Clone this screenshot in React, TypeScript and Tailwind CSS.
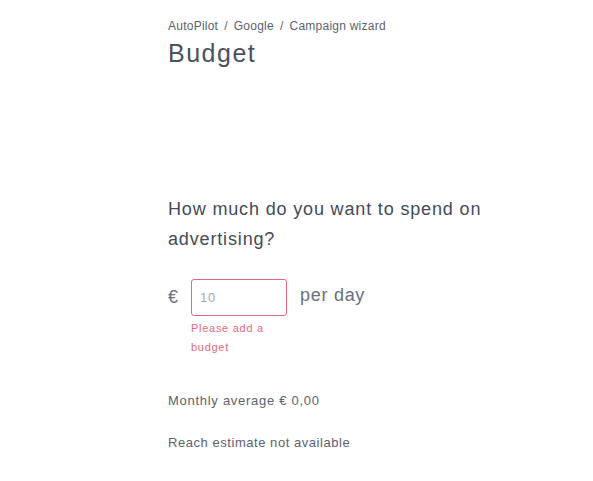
export default function App() {
  return (
    <div className="min-h-[481px] bg-white font-['Liberation_Sans',Arial,sans-serif] tracking-[0.045em] text-[#4a5160]">
      <div className="ml-[168px] w-[340px] pt-[17px]">
        <nav className="flex items-center gap-[6px] text-[12px] leading-[18px] tracking-[0.02em] text-[#5b6270]">
          <span>AutoPilot</span>
          <span>/</span>
          <span>Google</span>
          <span>/</span>
          <span>Campaign wizard</span>
        </nav>
        <h1 className="mt-[3px] text-[25px] leading-[30px] tracking-[0.06em] text-[#4a5160]">Budget</h1>

        <h2 className="mt-[126px] text-[18px] leading-[30px] tracking-[0.047em] text-[#434b5a]">
          How much do you want to spend on advertising?
        </h2>

        <div className="mt-[25px] flex items-start">
          <span className="mt-[8px] w-[23px] text-[18px] leading-[20px] text-[#6a7080]">€</span>
          <div className="flex flex-col">
            <input
              defaultValue=""
              placeholder="10"
              className="h-[37px] w-[96px] rounded-[3px] border border-[#e8677e] px-[8px] text-[13px] text-[#4a5160] outline-none placeholder:text-[#a3a9b5]"
            />
            <p className="mt-[3px] w-[90px] text-[11px] leading-[19px] text-[#e8677e]">
              Please add a budget
            </p>
          </div>
          <span className="ml-[13px] mt-[6px] text-[18px] leading-[20px] text-[#6a7080]">per day</span>
        </div>

        <p className="mt-[35px] text-[13px] leading-[18px] text-[#5b6270]">Monthly average € 0,00</p>
        <p className="mt-[24px] text-[13px] leading-[18px] tracking-[0.042em] text-[#5b6270]">Reach estimate not available</p>
      </div>
    </div>
  );
}
